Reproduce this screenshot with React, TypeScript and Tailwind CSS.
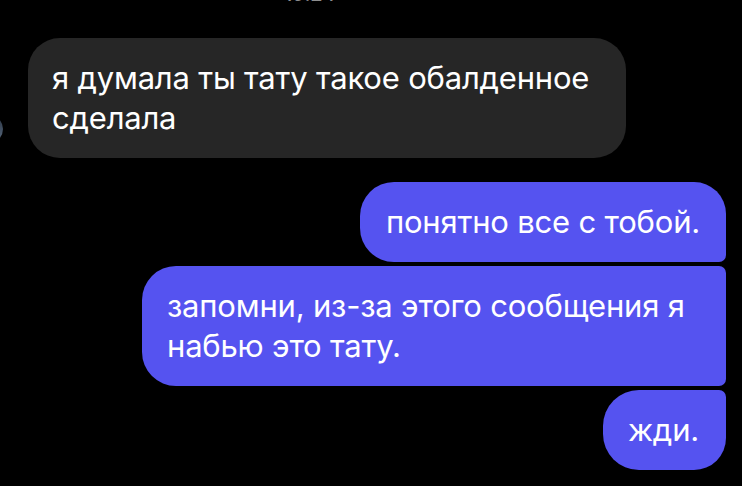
// Direct message thread: one incoming bubble, three grouped outgoing bubbles
export default function App() {
  return (
    <div className="relative h-[486px] w-[742px] overflow-hidden bg-black font-['Inter',sans-serif] text-[31px] leading-[40px] tracking-[-0.2px] text-white">
      {/* timestamp, mostly scrolled out of view */}
      <div className="absolute left-[284px] top-[-18px] text-[20px] leading-[24px] font-medium text-[#8e8e8e]">19:24</div>

      {/* sender avatar, clipped by the left edge */}
      <div className="absolute left-[-25px] top-[115px] h-[28px] w-[28px] rounded-full bg-gradient-to-b from-[#2a3442] to-[#5a6b80]" />

      <div className="flex flex-col pt-[38px]">
        <div className="ml-[28px] w-[598px] rounded-[32px] bg-[#262626] px-6 py-5">
          я думала ты тату такое обалденное сделала
        </div>

        <div className="mt-[24px] flex flex-col items-end gap-[4px] pr-[16px]">
          <div className="rounded-l-[34px] rounded-tr-[32px] rounded-br-[7px] bg-[#5553f0] pl-[26px] pr-[26px] py-5">
            понятно все с тобой.
          </div>
          <div className="w-[584px] rounded-l-[34px] rounded-r-[7px] bg-[#5553f0] pl-[25px] pr-[24px] py-5">
            запомни, из-за этого сообщения я набью это тату.
          </div>
          <div className="rounded-l-[36px] rounded-tr-[7px] rounded-br-[32px] bg-[#5553f0] pl-[25px] pr-[27px] py-5">
            жди.
          </div>
        </div>
      </div>
    </div>
  );
}
